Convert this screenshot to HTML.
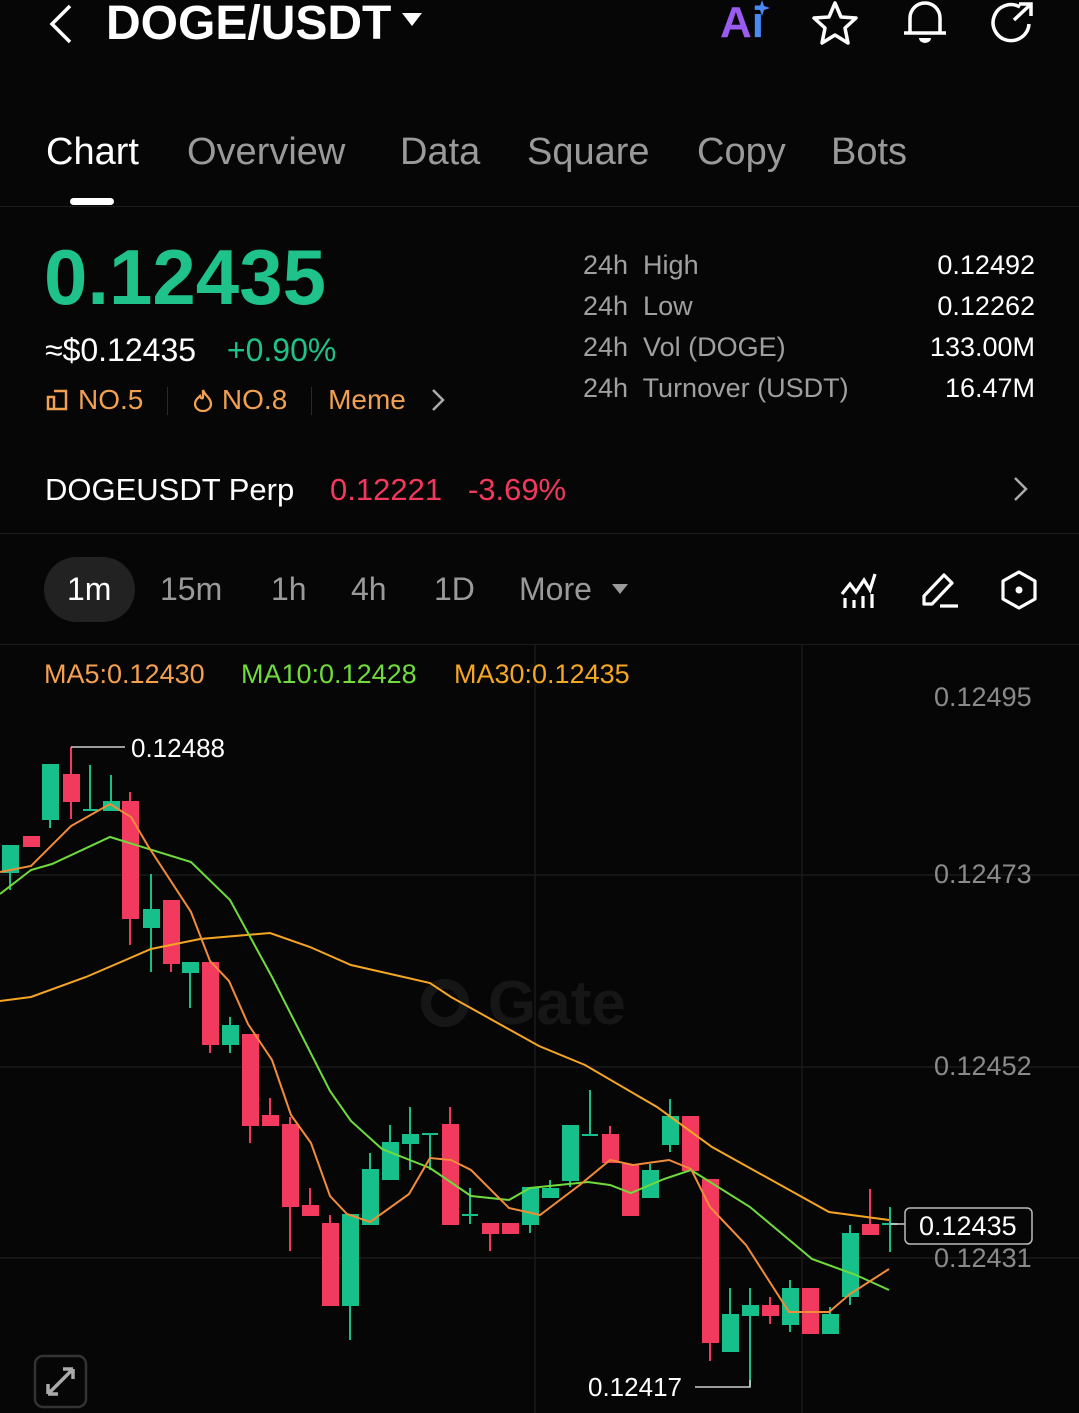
<!DOCTYPE html>
<html><head><meta charset="utf-8"><style>
*{margin:0;padding:0;box-sizing:border-box}
body{width:1079px;height:1413px;background:#060606;color:#fff;font-family:"Liberation Sans",Arial,sans-serif;position:relative;overflow:hidden}
.a{position:absolute;white-space:nowrap}
.tab{font-size:38px;color:#9a9a9a;top:131px}
.lbl{font-size:27px;color:#a0a0a0;left:583px}
.val{font-size:27px;color:#fff;right:44px;text-align:right}
.tf{font-size:32px;color:#9a9a9a;top:571px}
.ax{font-size:27px;color:#8a8a8a;left:934px}
</style></head><body>
<svg class="a" style="left:44px;top:4px" width="32" height="40" viewBox="0 0 32 40"><path d="M26 2 L8 20 L26 38" stroke="#fff" stroke-width="3.5" fill="none"/></svg>
<div class="a" style="left:106px;top:-4px;font-size:48px;font-weight:bold">DOGE/USDT</div>
<svg class="a" style="left:402px;top:13px" width="20" height="14"><path d="M0 0 H20 L10 13Z" fill="#fff"/></svg>
<div class="a" style="left:720px;top:-2px;font-size:44px;font-weight:bold;color:#9a5cf0">A<span style="color:#4a8af5">i</span></div>
<svg class="a" style="left:754px;top:0" width="16" height="16"><path d="M8 0 L10 6 L16 8 L10 10 L8 16 L6 10 L0 8 L6 6Z" fill="#4a8af5"/></svg>
<svg class="a" style="left:810px;top:0" width="50" height="46"><path d="M25 3 L31 17 L46 18 L35 28 L38 43 L25 35 L12 43 L15 28 L4 18 L19 17Z" stroke="#fff" stroke-width="3.5" fill="none" stroke-linejoin="round"/></svg>
<svg class="a" style="left:900px;top:0" width="50" height="46"><path d="M10 32 V18 A15 15 0 0 1 40 18 V32 M4 33 H46" stroke="#fff" stroke-width="3.5" fill="none"/><path d="M19 38 H31 A6 5 0 0 1 19 38Z" fill="#fff"/></svg>
<svg class="a" style="left:988px;top:0" width="50" height="46"><path d="M32 7 A18 18 0 1 0 41 24" stroke="#fff" stroke-width="3.5" fill="none"/><path d="M26 20 L43 4 M31 4 H43 V16" stroke="#fff" stroke-width="3.5" fill="none"/></svg>

<div class="a tab" style="left:46px;color:#fff">Chart</div>
<div class="a tab" style="left:187px">Overview</div>
<div class="a tab" style="left:400px">Data</div>
<div class="a tab" style="left:527px">Square</div>
<div class="a tab" style="left:697px">Copy</div>
<div class="a tab" style="left:831px">Bots</div>
<div class="a" style="left:70px;top:198px;width:44px;height:7px;border-radius:4px;background:#fff"></div>
<div class="a" style="left:0;top:206px;width:1079px;height:1px;background:#1c1c1c"></div>

<div class="a" style="left:44px;top:232px;font-size:78px;font-weight:bold;color:#1ec28a">0.12435</div>
<div class="a" style="left:45px;top:332px;font-size:32px">≈$0.12435 <span style="color:#1ec28a;margin-left:22px">+0.90%</span></div>
<div class="a" style="left:46px;top:384px;font-size:28px;color:#f0a050">
<svg width="22" height="22" style="vertical-align:-2px;margin-right:10px"><path d="M2 8 H8 V20 H2Z M8 2 H20 V20 H8" stroke="#f0a050" stroke-width="2.5" fill="none"/></svg>NO.5
<span style="display:inline-block;width:1px;height:28px;background:#2a2a2a;margin:0 16px;vertical-align:-6px"></span>
<svg width="22" height="24" style="vertical-align:-3px;margin-right:8px"><path d="M11 2 C13 8 19 10 19 16 A8 7 0 0 1 3 16 C3 12 6 10 8 8 C9 11 11 11 11 9Z" stroke="#f0a050" stroke-width="2.3" fill="none"/></svg>NO.8
<span style="display:inline-block;width:1px;height:28px;background:#2a2a2a;margin:0 16px;vertical-align:-6px"></span>Meme
<svg width="20" height="24" style="margin-left:14px;vertical-align:-3px"><path d="M5 2 L15 12 L5 22" stroke="#aaa" stroke-width="2.5" fill="none"/></svg></div>

<div class="a lbl" style="top:250px">24h&nbsp; High</div><div class="a val" style="top:250px">0.12492</div>
<div class="a lbl" style="top:291px">24h&nbsp; Low</div><div class="a val" style="top:291px">0.12262</div>
<div class="a lbl" style="top:332px">24h&nbsp; Vol (DOGE)</div><div class="a val" style="top:332px">133.00M</div>
<div class="a lbl" style="top:373px">24h&nbsp; Turnover (USDT)</div><div class="a val" style="top:373px">16.47M</div>

<div class="a" style="left:45px;top:472px;font-size:31px">DOGEUSDT Perp</div>
<div class="a" style="left:330px;top:472px;font-size:31px;color:#f2385c">0.12221&nbsp;&nbsp; -3.69%</div>
<svg class="a" style="left:1012px;top:476px" width="18" height="26"><path d="M3 2 L14 13 L3 24" stroke="#aaa" stroke-width="2.5" fill="none"/></svg>
<div class="a" style="left:0;top:533px;width:1079px;height:1px;background:#1c1c1c"></div>

<div class="a" style="left:44px;top:557px;width:91px;height:65px;border-radius:33px;background:#222"></div>
<div class="a tf" style="left:67px;color:#fff">1m</div>
<div class="a tf" style="left:160px">15m</div>
<div class="a tf" style="left:271px">1h</div>
<div class="a tf" style="left:351px">4h</div>
<div class="a tf" style="left:434px">1D</div>
<div class="a tf" style="left:519px">More</div>
<svg class="a" style="left:612px;top:584px" width="16" height="12"><path d="M0 0 H16 L8 10Z" fill="#9a9a9a"/></svg>
<svg class="a" style="left:840px;top:570px" width="38" height="40"><path d="M2 24 L10 14 L16 22 L24 10 L30 20 L35 4" stroke="#fff" stroke-width="3.2" fill="none"/><path d="M5 28 V38 M14 30 V38 M23 26 V38 M32 24 V38" stroke="#fff" stroke-width="3.2"/></svg>
<svg class="a" style="left:920px;top:570px" width="40" height="40"><path d="M4 34 V26 L24 5 L32 13 L12 34Z" stroke="#fff" stroke-width="3.2" fill="none" stroke-linejoin="round"/><path d="M20 36 H38" stroke="#fff" stroke-width="3.2"/></svg>
<svg class="a" style="left:1000px;top:570px" width="38" height="40"><path d="M19 2 L35 11 V29 L19 38 L3 29 V11Z" stroke="#fff" stroke-width="3.2" fill="none" stroke-linejoin="round"/><circle cx="19" cy="20" r="3.5" fill="#fff"/></svg>
<div class="a" style="left:0;top:644px;width:1079px;height:1px;background:#1c1c1c"></div>

<svg class="a" style="left:0;top:645px" width="1079" height="768" viewBox="0 645 1079 768">
<g stroke="#1a1a1a" stroke-width="1.5"><line x1="0" y1="875" x2="1079" y2="875"/><line x1="0" y1="1067" x2="1079" y2="1067"/><line x1="0" y1="1258" x2="1079" y2="1258"/><line x1="535" y1="645" x2="535" y2="1413"/><line x1="802" y1="645" x2="802" y2="1413"/></g>
<circle cx="445" cy="1003" r="19" fill="none" stroke="#161616" stroke-width="10"/>
<text x="488" y="1024" font-family="Liberation Sans" font-weight="bold" font-size="62" fill="#161616">Gate</text>
<g stroke-width="2">
<g stroke="#17c08a" fill="#17c08a">
<line x1="10" y1="846" x2="10" y2="890"/><rect x="3" y="846" width="15" height="26"/>
<line x1="50" y1="765" x2="50" y2="828"/><rect x="43" y="765" width="15" height="54"/>
<line x1="90" y1="765" x2="90" y2="810"/><line x1="83" y1="810" x2="98" y2="810"/>
<line x1="111" y1="775" x2="111" y2="810"/><rect x="104" y="802" width="15" height="8"/>
<line x1="151" y1="874" x2="151" y2="972"/><rect x="144" y="910" width="15" height="17"/>
<line x1="190" y1="963" x2="190" y2="1008"/><rect x="183" y="963" width="15" height="9"/>
<line x1="230" y1="1017" x2="230" y2="1053"/><rect x="223" y="1026" width="15" height="18"/>
<line x1="350" y1="1215" x2="350" y2="1340"/><rect x="343" y="1215" width="15" height="90"/>
<line x1="370" y1="1153" x2="370" y2="1224"/><rect x="363" y="1170" width="15" height="54"/>
<line x1="390" y1="1125" x2="390" y2="1179"/><rect x="383" y="1143" width="15" height="36"/>
<line x1="410" y1="1107" x2="410" y2="1170"/><rect x="403" y="1135" width="15" height="8"/>
<line x1="430" y1="1134" x2="430" y2="1170"/><line x1="422" y1="1134" x2="438" y2="1134"/>
<line x1="470" y1="1188" x2="470" y2="1224"/><line x1="462" y1="1215" x2="478" y2="1215"/>
<line x1="530" y1="1188" x2="530" y2="1233"/><rect x="523" y="1188" width="15" height="36"/>
<line x1="550" y1="1180" x2="550" y2="1197"/><rect x="543" y="1189" width="15" height="8"/>
<line x1="570" y1="1126" x2="570" y2="1187"/><rect x="563" y="1126" width="15" height="54"/>
<line x1="590" y1="1090" x2="590" y2="1135"/><line x1="582" y1="1135" x2="598" y2="1135"/>
<line x1="650" y1="1164" x2="650" y2="1197"/><rect x="643" y="1171" width="15" height="26"/>
<line x1="670" y1="1099" x2="670" y2="1152"/><rect x="663" y="1117" width="15" height="27"/>
<line x1="730" y1="1288" x2="730" y2="1351"/><rect x="723" y="1315" width="15" height="36"/>
<line x1="750" y1="1288" x2="750" y2="1387"/><rect x="743" y="1306" width="15" height="9"/>
<line x1="790" y1="1280" x2="790" y2="1332"/><rect x="783" y="1289" width="15" height="35"/>
<line x1="830" y1="1307" x2="830" y2="1333"/><rect x="823" y="1315" width="15" height="18"/>
<line x1="850" y1="1225" x2="850" y2="1305"/><rect x="843" y="1234" width="15" height="62"/>
<line x1="890" y1="1207" x2="890" y2="1252"/><line x1="882" y1="1224" x2="898" y2="1224"/>
</g>
<g stroke="#f23a5e" fill="#f23a5e">
<rect x="24" y="837" width="15" height="9"/>
<line x1="71" y1="747" x2="71" y2="819"/><rect x="64" y="775" width="15" height="26"/>
<line x1="130" y1="792" x2="130" y2="945"/><rect x="123" y="802" width="15" height="116"/>
<line x1="171" y1="901" x2="171" y2="972"/><rect x="164" y="901" width="15" height="62"/>
<line x1="210" y1="963" x2="210" y2="1053"/><rect x="203" y="963" width="15" height="81"/>
<line x1="250" y1="1035" x2="250" y2="1143"/><rect x="243" y="1035" width="15" height="90"/>
<line x1="270" y1="1098" x2="270" y2="1125"/><rect x="263" y="1116" width="15" height="9"/>
<line x1="290" y1="1117" x2="290" y2="1251"/><rect x="283" y="1125" width="15" height="81"/>
<line x1="310" y1="1188" x2="310" y2="1215"/><rect x="303" y="1206" width="15" height="9"/>
<line x1="330" y1="1215" x2="330" y2="1305"/><rect x="323" y="1224" width="15" height="81"/>
<line x1="450" y1="1107" x2="450" y2="1224"/><rect x="443" y="1125" width="15" height="99"/>
<line x1="490" y1="1224" x2="490" y2="1251"/><rect x="483" y="1224" width="15" height="9"/>
<rect x="503" y="1224" width="15" height="9"/>
<line x1="610" y1="1126" x2="610" y2="1162"/><rect x="603" y="1135" width="15" height="27"/>
<rect x="623" y="1165" width="15" height="50"/>
<rect x="683" y="1117" width="15" height="53"/>
<line x1="710" y1="1180" x2="710" y2="1361"/><rect x="703" y="1180" width="15" height="162"/>
<line x1="770" y1="1297" x2="770" y2="1324"/><rect x="763" y="1306" width="15" height="9"/>
<rect x="803" y="1289" width="15" height="44"/>
<line x1="870" y1="1189" x2="870" y2="1234"/><rect x="863" y="1225" width="15" height="9"/>
</g></g>
<g fill="none" stroke-width="2">
<polyline stroke="#f5a623" points="0,1001 31,997 86,977 151,949 200,939 270,933 310,947 351,965 430,983 451,997 539,1046 585,1065 657,1107 712,1147 829,1212 889,1220"/>
<polyline stroke="#6fdc3c" points="0,894 31,870 52,864 110,837 191,862 230,900 272,977 330,1091 351,1121 382,1149 430,1168 471,1196 509,1200 530,1188 588,1182 610,1185 631,1193 664,1179 691,1170 750,1207 812,1259 856,1275 889,1290"/>
<polyline stroke="#f08c3a" points="0,872 31,866 71,826 110,804 131,817 148,846 191,912 210,961 229,981 248,1024 272,1060 291,1115 311,1143 330,1196 347,1214 370,1222 409,1194 430,1158 451,1160 471,1170 509,1208 540,1215 581,1184 610,1160 633,1165 669,1160 691,1169 710,1207 746,1245 789,1312 829,1312 850,1294 889,1269"/>
</g>
<g stroke="#ccc" stroke-width="1.5" fill="none"><polyline points="71,747 125,747"/><polyline points="695,1387 750,1387 750,1380"/><line x1="890" y1="1224" x2="905" y2="1224"/></g>
<text x="131" y="757" font-family="Liberation Sans" font-size="26" fill="#fff">0.12488</text>
<text x="588" y="1396" font-family="Liberation Sans" font-size="26" fill="#fff">0.12417</text>
<rect x="905" y="1208" width="127" height="36" rx="5" fill="#060606" stroke="#bbb" stroke-width="1.5"/>
<text x="919" y="1235" font-family="Liberation Sans" font-size="27" fill="#fff">0.12435</text>
<rect x="35" y="1356" width="51" height="51" rx="8" fill="none" stroke="#333" stroke-width="2.5"/>
<path d="M48 1394 L73 1369 M48 1394 V1384 M48 1394 H58 M73 1369 H63 M73 1369 V1379" stroke="#aaa" stroke-width="3.5" fill="none"/>
</svg>
<div class="a" style="left:44px;top:659px;font-size:27px;color:#f5a050">MA5:0.12430</div>
<div class="a" style="left:241px;top:659px;font-size:27px;color:#6fdc3c">MA10:0.12428</div>
<div class="a" style="left:454px;top:659px;font-size:27px;color:#f5a623">MA30:0.12435</div>
<div class="a ax" style="top:682px">0.12495</div>
<div class="a ax" style="top:859px">0.12473</div>
<div class="a ax" style="top:1051px">0.12452</div>
<div class="a ax" style="top:1243px">0.12431</div>
</body></html>
